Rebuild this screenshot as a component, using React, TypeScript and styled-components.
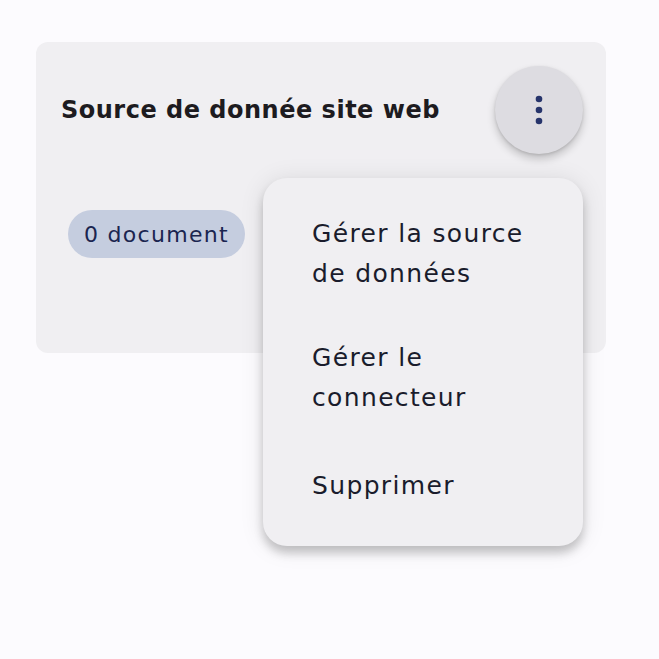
import React from "react";
import styled, { createGlobalStyle } from "styled-components";

const Global = createGlobalStyle`
  html, body { margin: 0; padding: 0; background: #fcfbfe; }
  body { font-family: "DejaVu Sans", "Noto Sans", sans-serif; }
  * { box-sizing: border-box; }
`;

const Page = styled.div`
  padding: 42px 53px 0 36px;
  height: 659px;
`;

const Card = styled.section`
  position: relative;
  width: 570px;
  height: 311px;
  background: #f0eff2;
  border-radius: 12px;
  display: flex;
  flex-direction: column;
`;

const Header = styled.div`
  display: flex;
  align-items: center;
  justify-content: space-between;
  padding: 24px 23px 0 25px;
`;

const Title = styled.h2`
  margin: 0;
  font-family: "DejaVu Sans", sans-serif;
  font-weight: 700;
  font-size: 24px;
  letter-spacing: 0.5px;
  color: #1d1b20;
`;

const IconButton = styled.button`
  width: 88px;
  height: 88px;
  border: none;
  border-radius: 50%;
  background: #dddce1;
  box-shadow: 0 5px 9px rgba(0, 0, 0, 0.2), 0 1px 3px rgba(0, 0, 0, 0.12);
  display: flex;
  align-items: center;
  justify-content: center;
  padding: 0;
`;

const Body = styled.div`
  display: flex;
  padding: 56px 0 0 32px;
`;

const Chip = styled.span`
  display: inline-flex;
  align-items: center;
  height: 48px;
  padding: 0 16px;
  border-radius: 24px;
  background: #c5cddf;
  color: #1b2550;
  font-size: 22px;
  letter-spacing: 1.3px;
`;

const Menu = styled.ul`
  position: absolute;
  left: 227px;
  top: 136px;
  width: 320px;
  height: 368px;
  margin: 0;
  padding: 14px 0 12px;
  list-style: none;
  background: #f0eff2;
  border-radius: 24px;
  box-shadow: 0 7px 10px rgba(0, 0, 0, 0.2), 0 2px 24px rgba(0, 0, 0, 0.1);
  z-index: 2;
`;

const MenuItem = styled.li`
  padding: 22px 36px 22px 49px;
  font-size: 25px;
  line-height: 40px;
  letter-spacing: 1.35px;
  color: #1a1c2c;
  &:last-child {
    padding-top: 26px;
  }
`;

const Dots = () => (
  <svg width="8" height="32" viewBox="0 0 8 32" aria-hidden="true">
    <circle cx="4" cy="5" r="3.3" fill="#26346b" />
    <circle cx="4" cy="16" r="3.3" fill="#26346b" />
    <circle cx="4" cy="27" r="3.3" fill="#26346b" />
  </svg>
);

export default function App() {
  return (
    <>
      <Global />
      <Page>
        <Card>
          <Header>
            <Title>Source de donnée site web</Title>
            <IconButton aria-label="Plus d'options">
              <Dots />
            </IconButton>
          </Header>
          <Body>
            <Chip>0 document</Chip>
          </Body>
          <Menu>
            <MenuItem>Gérer la source de données</MenuItem>
            <MenuItem>Gérer le connecteur</MenuItem>
            <MenuItem>Supprimer</MenuItem>
          </Menu>
        </Card>
      </Page>
    </>
  );
}
